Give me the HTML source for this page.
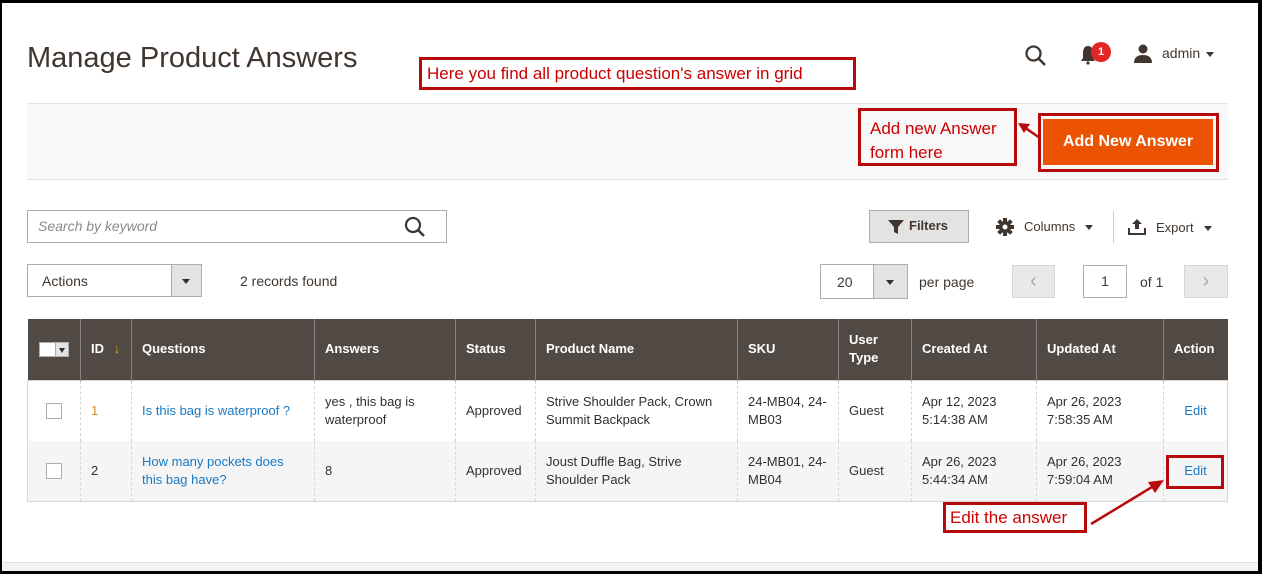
<!DOCTYPE html>
<html><head><meta charset="utf-8">
<style>
*{box-sizing:border-box;margin:0;padding:0}
body{width:1262px;height:574px;position:relative;overflow:hidden;background:#fff;font-family:"Liberation Sans",sans-serif;color:#41362f;font-size:13px}
.a{position:absolute}
.frame{position:absolute;left:0;top:0;width:1262px;height:574px;border-style:solid;border-color:#000;border-width:3px 4px 3px 2px;pointer-events:none;z-index:10}
.red{position:absolute;border:3px solid #b70a0a;color:#c00;font-size:17px;line-height:24px}
table{position:absolute;left:27px;top:319px;width:1200px;border-collapse:collapse;table-layout:fixed;font-size:13px}
th{background:#514943;color:#fff;font-weight:bold;text-align:left;padding:0 10px;height:61px;border-left:1px solid #8a837f;font-size:13px;line-height:18px}
td{padding:0 10px;border-left:1px dashed #d6d6d6;height:60px;line-height:18px;color:#303030;vertical-align:middle}
tr.r1 td{background:#fff;height:61px}
tr.r2 td{background:#f5f5f5}
tbody{border:1px solid #d6d6d6}
a{color:#1979c3;text-decoration:none}
.cb{width:16px;height:16px;border:1px solid #adadad;background:#fff;display:inline-block;vertical-align:middle}
.btn{position:absolute;border:1px solid #adadad;background:#e3e3e3}
</style></head><body>
<div class="frame"></div>
<div class="a" style="left:795px;top:0;width:250px;height:3px;background:#222"></div>

<div class="a" style="left:27px;top:40px;font-size:29px;color:#41362f;line-height:36px">Manage Product Answers</div>
<div class="red" style="left:419px;top:57px;width:437px;height:33px;padding-left:5px;line-height:27px">Here you find all product question's answer in grid</div>

<svg class="a" style="left:1024px;top:44px" width="24" height="24" viewBox="0 0 24 24"><circle cx="9.5" cy="9.5" r="7" fill="none" stroke="#41362f" stroke-width="2.3"/><line x1="14.5" y1="14.5" x2="21" y2="21" stroke="#41362f" stroke-width="2.6"/></svg>
<svg class="a" style="left:1079px;top:44px" width="18" height="22" viewBox="0 0 18 22"><path d="M9 2C5 2 4 6 4 9v5l-2 3h14l-2-3V9c0-3-1-7-5-7z" fill="#41362f"/><circle cx="9" cy="19" r="1.6" fill="#41362f"/></svg>
<div class="a" style="left:1091px;top:42px;width:20px;height:20px;border-radius:50%;background:#e22626;color:#fff;font-weight:bold;font-size:11px;text-align:center;line-height:20px">1</div>
<svg class="a" style="left:1133px;top:43px" width="20" height="20" viewBox="0 0 20 20"><circle cx="10" cy="6" r="4.5" fill="#41362f"/><path d="M1 20c0-6 4-8 9-8s9 2 9 8z" fill="#41362f"/></svg>
<div class="a" style="left:1162px;top:45px;font-size:14px;color:#41362f">admin</div>
<div class="a" style="left:1206px;top:52px;border-left:4px solid transparent;border-right:4px solid transparent;border-top:5px solid #41362f"></div>

<div class="a" style="left:27px;top:103px;width:1201px;height:77px;background:#f8f8f8;border-top:1px solid #e3e3e3;border-bottom:1px solid #e3e3e3"></div>
<div class="red" style="left:858px;top:108px;width:159px;height:58px;padding:6px 0 0 9px;line-height:24px">Add new Answer<br>form here</div>
<svg class="a" style="left:1016px;top:122px" width="26" height="18" viewBox="0 0 26 18"><line x1="24" y1="16" x2="8" y2="5" stroke="#b70a0a" stroke-width="2.5"/><path d="M2 1l12 1-6 9z" fill="#b70a0a"/></svg>
<div class="a" style="left:1038px;top:113px;width:181px;height:59px;border:3px solid #b70a0a"></div>
<div class="a" style="left:1043px;top:119px;width:170px;height:46px;background:#eb5202;color:#fff;font-weight:bold;font-size:16px;text-align:center;line-height:46px">Add New Answer</div>

<div class="a" style="left:27px;top:210px;width:420px;height:33px;border:1px solid #adadad;background:#fff"></div>
<div class="a" style="left:38px;top:218px;font-style:italic;color:#8a8a8a;font-size:14px">Search by keyword</div>
<svg class="a" style="left:404px;top:216px" width="22" height="22" viewBox="0 0 22 22"><circle cx="9" cy="9" r="7" fill="none" stroke="#41362f" stroke-width="2.2"/><line x1="14" y1="14" x2="20" y2="20" stroke="#41362f" stroke-width="2.5"/></svg>

<div class="btn" style="left:869px;top:210px;width:100px;height:33px"></div>
<svg class="a" style="left:888px;top:219px" width="16" height="16" viewBox="0 0 16 16"><path d="M0 1h16l-6 7v7l-4-2V8z" fill="#41362f"/></svg>
<div class="a" style="left:909px;top:218px;font-size:13px;font-weight:bold;color:#41362f">Filters</div>
<svg class="a" style="left:996px;top:218px" width="18" height="18" viewBox="0 0 18 18"><g fill="#41362f"><circle cx="9" cy="9" r="6"/><rect x="7" y="0" width="4" height="18"/><rect x="0" y="7" width="18" height="4"/><rect x="7" y="0" width="4" height="18" transform="rotate(45 9 9)"/><rect x="7" y="0" width="4" height="18" transform="rotate(-45 9 9)"/></g><circle cx="9" cy="9" r="2.5" fill="#fff"/></svg>
<div class="a" style="left:1024px;top:219px;font-size:13px">Columns</div>
<div class="a" style="left:1085px;top:225px;border-left:4px solid transparent;border-right:4px solid transparent;border-top:5px solid #41362f"></div>
<div class="a" style="left:1113px;top:211px;width:1px;height:32px;background:#ccc"></div>
<svg class="a" style="left:1128px;top:219px" width="18" height="16" viewBox="0 0 18 16"><path d="M9 0l5 5h-3v5H7V5H4z" fill="#41362f"/><path d="M1 9v6h16V9" fill="none" stroke="#41362f" stroke-width="2"/></svg>
<div class="a" style="left:1156px;top:220px;font-size:13px">Export</div>
<div class="a" style="left:1204px;top:226px;border-left:4px solid transparent;border-right:4px solid transparent;border-top:5px solid #41362f"></div>

<div class="a" style="left:27px;top:264px;width:175px;height:33px;border:1px solid #adadad;background:#fff"></div>
<div class="a" style="left:171px;top:265px;width:30px;height:31px;background:#e3e3e3;border-left:1px solid #adadad"></div>
<div class="a" style="left:182px;top:279px;border-left:4px solid transparent;border-right:4px solid transparent;border-top:5px solid #303030"></div>
<div class="a" style="left:42px;top:273px;font-size:14px">Actions</div>
<div class="a" style="left:240px;top:273px;font-size:14px">2 records found</div>

<div class="a" style="left:820px;top:264px;width:88px;height:35px;border:1px solid #adadad;background:#fff"></div>
<div class="a" style="left:873px;top:265px;width:34px;height:33px;background:#e3e3e3;border-left:1px solid #adadad"></div>
<div class="a" style="left:886px;top:280px;border-left:4px solid transparent;border-right:4px solid transparent;border-top:5px solid #303030"></div>
<div class="a" style="left:837px;top:274px;font-size:14px">20</div>
<div class="a" style="left:919px;top:274px;font-size:14px">per page</div>
<div class="a" style="left:1012px;top:265px;width:43px;height:33px;background:#e9e9e9;border:1px solid #d6d6d6;color:#aaa;font-size:20px;text-align:center;line-height:30px">&#8249;</div>
<div class="a" style="left:1083px;top:265px;width:44px;height:33px;border:1px solid #adadad;text-align:center;line-height:31px;font-size:14px">1</div>
<div class="a" style="left:1140px;top:274px;font-size:14px">of 1</div>
<div class="a" style="left:1184px;top:265px;width:44px;height:33px;background:#e9e9e9;border:1px solid #d6d6d6;color:#aaa;font-size:20px;text-align:center;line-height:30px">&#8250;</div>

<table>
<colgroup><col style="width:53px"><col style="width:51px"><col style="width:183px"><col style="width:141px"><col style="width:80px"><col style="width:202px"><col style="width:101px"><col style="width:73px"><col style="width:125px"><col style="width:127px"><col style="width:64px"></colgroup>
<thead><tr>
<th style="border-left:none;padding:0 0 0 11px"><span style="display:inline-block;width:30px;height:15px;background:#fff;border:1px solid #adadad;position:relative;vertical-align:middle"><span style="position:absolute;right:0;top:0;width:13px;height:13px;background:#e3e3e3;border-left:1px solid #adadad"></span><span style="position:absolute;right:3px;top:5px;border-left:3.5px solid transparent;border-right:3.5px solid transparent;border-top:5px solid #303030"></span></span></th>
<th>ID <span style="color:#eb9d2a;margin-left:6px">&#8595;</span></th>
<th>Questions</th><th>Answers</th><th>Status</th><th>Product Name</th><th>SKU</th><th>User<br>Type</th><th>Created At</th><th>Updated At</th><th>Action</th>
</tr></thead>
<tbody>
<tr class="r1"><td style="border-left:none;padding-left:18px"><span class="cb"></span></td><td style="color:#d08a1e">1</td><td><a>Is this bag is waterproof ?</a></td><td>yes , this bag is waterproof</td><td>Approved</td><td>Strive Shoulder Pack, Crown Summit Backpack</td><td>24-MB04, 24-MB03</td><td>Guest</td><td>Apr 12, 2023 5:14:38 AM</td><td>Apr 26, 2023 7:58:35 AM</td><td style="text-align:center;padding:0"><a>Edit</a></td></tr>
<tr class="r2"><td style="border-left:none;padding-left:18px"><span class="cb"></span></td><td>2</td><td><a>How many pockets does this bag have?</a></td><td>8</td><td>Approved</td><td>Joust Duffle Bag, Strive Shoulder Pack</td><td>24-MB01, 24-MB04</td><td>Guest</td><td>Apr 26, 2023 5:44:34 AM</td><td>Apr 26, 2023 7:59:04 AM</td><td style="text-align:center;padding:0"><a>Edit</a></td></tr>
</tbody></table>

<div class="a" style="left:1166px;top:455px;width:58px;height:34px;border:3px solid #b70a0a"></div>
<div class="red" style="left:943px;top:502px;width:144px;height:31px;padding-left:4px;line-height:25px">Edit the answer</div>
<svg class="a" style="left:1088px;top:478px" width="80" height="50" viewBox="0 0 80 50"><line x1="3" y1="46" x2="64" y2="9" stroke="#b70a0a" stroke-width="2.5"/><path d="M76 2L60 4l7 11z" fill="#b70a0a"/></svg>

<div class="a" style="left:2px;top:562px;width:1256px;height:9px;background:#f4f4f4;border-top:1px solid #e3e3e3"></div>
</body></html>
